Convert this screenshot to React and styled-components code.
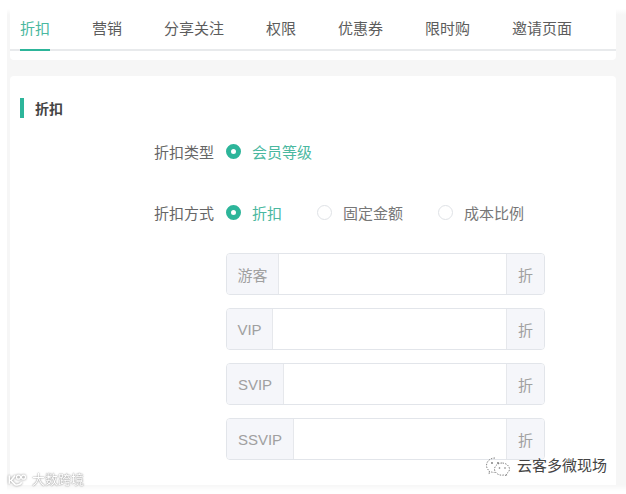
import React from 'react'
import styled, { createGlobalStyle } from 'styled-components'

const GlobalStyle = createGlobalStyle`
  html, body {
    margin: 0;
    padding: 0;
    background: #fff;
  }
  *, *::before {
    box-sizing: border-box;
  }
`

const tabs = ['折扣', '营销', '分享关注', '权限', '优惠券', '限时购', '邀请页面']
const levels = [
  { name: '游客', width: 52 },
  { name: 'VIP', width: 46 },
  { name: 'SVIP', width: 57 },
  { name: 'SSVIP', width: 67 },
]

const App = () => (
  <>
    <GlobalStyle />
    <Page>
      <TabCard>
        <TabBar>
          {tabs.map((t, i) => (
            <Tab key={t} $active={i === 0}>{t}</Tab>
          ))}
        </TabBar>
      </TabCard>
      <FormCard>
        <SectionTitle>折扣</SectionTitle>
        <FormRow $bottom={39}>
          <Label>折扣类型</Label>
          <Radio $checked>会员等级</Radio>
        </FormRow>
        <FormRow $bottom={30}>
          <Label>折扣方式</Label>
          <Radio $checked>折扣</Radio>
          <Radio>固定金额</Radio>
          <Radio>成本比例</Radio>
        </FormRow>
        <InputList>
          {levels.map((l) => (
            <InputGroup key={l.name}>
              <Addon $width={l.width}>{l.name}</Addon>
              <Field />
              <Addon $width={38} $right>折</Addon>
            </InputGroup>
          ))}
        </InputList>
      </FormCard>
      <Watermark>
        <WatermarkLogo viewBox="0 0 30 16">
          <path d="M4 2v10M11 2L6 8l5 5c3 1 6 0 8-3" fill="none" stroke="#fff" strokeWidth="2" />
          <circle cx="15" cy="4" r="2.400" fill="none" stroke="#fff" strokeWidth="1.400" />
          <circle cx="21" cy="4" r="2.400" fill="none" stroke="#fff" strokeWidth="1.400" />
        </WatermarkLogo>
        大数跨境
      </Watermark>
      <Account>
        <AccountIcon viewBox="0 0 26 20">
          <path d="M10 2C5 2 1.500 5.500 1.500 9.500c0 2.300 1.200 4.200 3 5.500l-.8 2.500 3-1.500c1 .3 1.800.5 2.800.5" fill="none" stroke="#777" strokeWidth=".9" strokeDasharray="1.500 1.200" />
          <path d="M17 7c-4 0-7.500 2.800-7.500 6.200s3.500 6 7.500 6c.8 0 1.600-.1 2.400-.4l2.400 1.200-.6-2.200c2-1.100 3.300-2.800 3.300-4.600C24.500 9.800 21 7 17 7z" fill="none" stroke="#777" strokeWidth=".9" strokeDasharray="1.500 1.200" />
          <circle cx="7" cy="7" r=".9" fill="#777" />
          <circle cx="13" cy="7" r=".9" fill="#777" />
          <circle cx="14.500" cy="12" r=".8" fill="#777" />
          <circle cx="20" cy="12" r=".8" fill="#777" />
        </AccountIcon>
        云客多微现场
      </Account>
    </Page>
  </>
)

const Page = styled.div`
  position: relative;
  width: 626px;
  height: 494px;
  padding: 0 10px 9px;
  background:
    linear-gradient(#fff 9px, rgba(255, 255, 255, 0) 15px),
    linear-gradient(rgba(255, 255, 255, 0) 485px, #fff 491px),
    linear-gradient(to right, #fff 7px, #f6f6f6 7px);
  font-family: 'Liberation Sans', 'Noto Sans CJK SC', sans-serif;
  overflow: hidden;
`
const TabCard = styled.div`
  height: 60px;
  padding-top: 12px;
  background: #fff;
  border-radius: 0 0 4px 4px;
`
const TabBar = styled.div`
  display: flex;
  gap: 42px;
  height: 39px;
  padding-left: 10px;
  border-bottom: 2px solid #e8eaec;
`
const Tab = styled.div`
  height: 39px;
  line-height: 34px;
  font-size: 15px;
  color: ${(p) => (p.$active ? '#4ab8a0' : '#5c5c5c')};
  border-bottom: 2px solid ${(p) => (p.$active ? '#2db59a' : 'transparent')};
`
const FormCard = styled.div`
  height: 409px;
  margin-top: 16px;
  background: #fff;
  border-radius: 4px 4px 0 0;
  padding: 22px 0 0 10px;
`
const SectionTitle = styled.div`
  height: 20px;
  line-height: 22px;
  padding-left: 11px;
  border-left: 4px solid #2db59a;
  font-size: 14px;
  font-weight: 700;
  color: #444;
  margin-bottom: 22px;
`
const FormRow = styled.div`
  display: flex;
  align-items: center;
  height: 22px;
  margin-bottom: ${(p) => p.$bottom}px;
`
const Label = styled.div`
  width: 194px;
  text-align: right;
  font-size: 15px;
  color: #666;
  margin-right: 12px;
`
const Radio = styled.div`
  display: flex;
  align-items: center;
  gap: 11px;
  margin-right: 35px;
  font-size: 15px;
  color: ${(p) => (p.$checked ? '#4ab8a0' : '#777')};
  &::before {
    content: '';
    flex: none;
    width: 15px;
    height: 15px;
    margin-top: 1px;
    border-radius: 50%;
    background: #fff;
    border: ${(p) => (p.$checked ? '5px solid #2db59a' : '1px solid #dfe2e6')};
  }
`
const InputList = styled.div`
  display: flex;
  flex-direction: column;
  gap: 13px;
  width: 319px;
  margin-left: 206px;
`
const InputGroup = styled.div`
  display: flex;
  height: 42px;
  border: 1px solid #e2e5ea;
  border-radius: 4px;
  overflow: hidden;
`
const Addon = styled.div`
  flex: none;
  width: ${(p) => p.$width}px;
  display: flex;
  align-items: center;
  justify-content: center;
  background: #f5f6fa;
  font-size: 15px;
  color: #a0a0a0;
  ${(p) => (p.$right ? 'border-left: 1px solid #e6e8ec;' : 'border-right: 1px solid #e6e8ec;')}
`
const Field = styled.div`
  flex: 1;
  background: #fff;
`
const Watermark = styled.div`
  position: absolute;
  left: 6px;
  top: 471px;
  display: flex;
  align-items: center;
  gap: 1px;
  font-size: 13px;
  line-height: 18px;
  color: #fff;
  text-shadow: 0 0 2px #999, 0 0 1px #888;
  filter: blur(0.4px);
`
const WatermarkLogo = styled.svg`
  width: 25px;
  height: 15px;
  filter: drop-shadow(0 0 1px #888);
`
const Account = styled.div`
  position: absolute;
  left: 485px;
  top: 456px;
  display: flex;
  align-items: center;
  gap: 6px;
  font-size: 15px;
  line-height: 20px;
  color: #444;
  text-shadow: 0 0 1px #fff;
`
const AccountIcon = styled.svg`
  width: 26px;
  height: 20px;
`

export default App
